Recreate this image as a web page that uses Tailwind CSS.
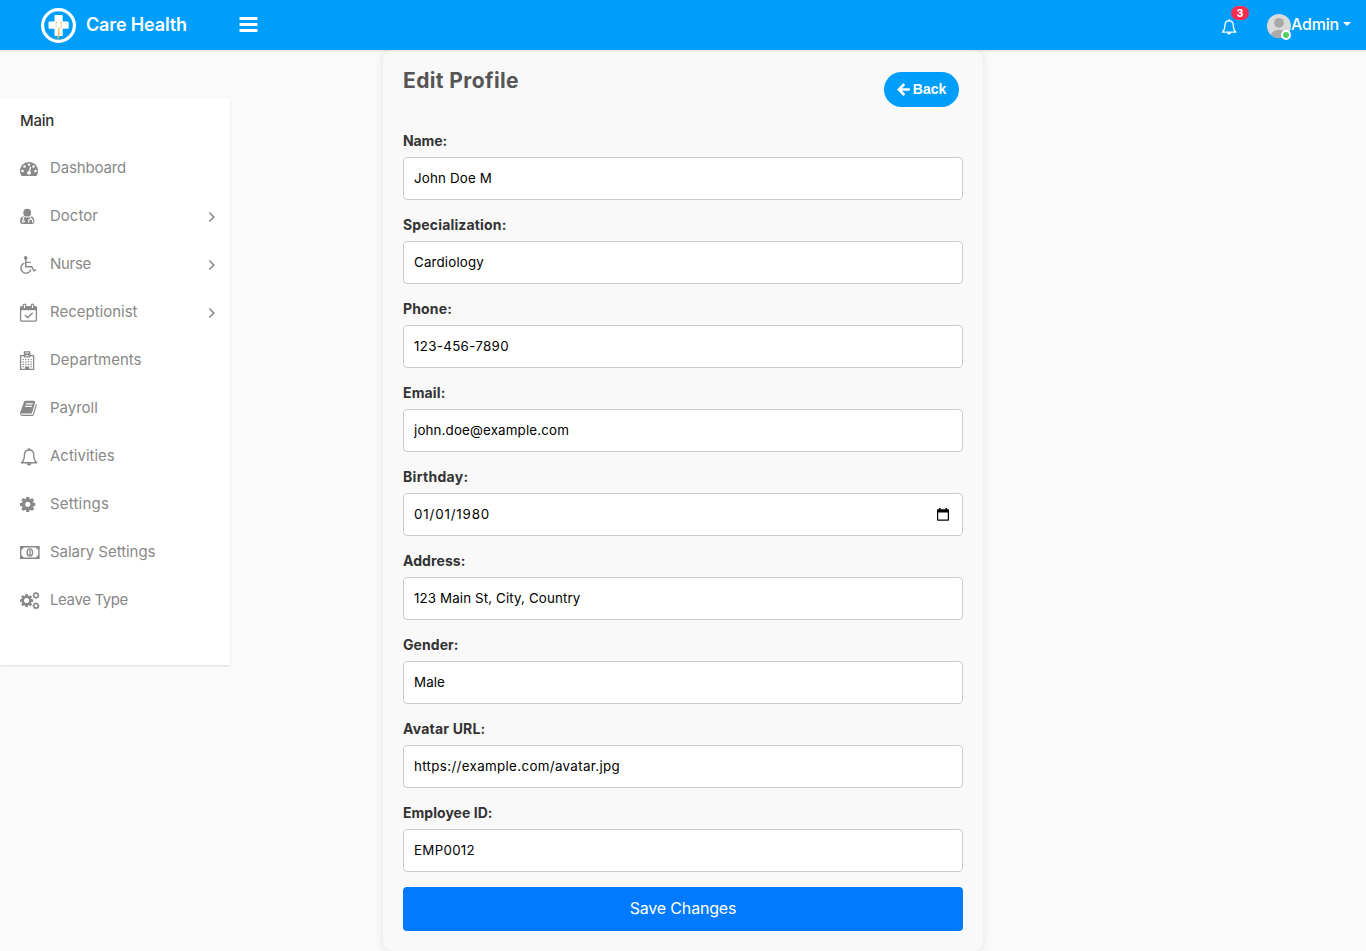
<!DOCTYPE html>
<html lang="en">
<head>
<meta charset="utf-8">
<title>Edit Profile - Care Health</title>
<script src="https://cdn.jsdelivr.net/npm/@tailwindcss/browser@4"></script>
</head>
<body class="h-[951px] overflow-hidden bg-[#fafafa] font-['Inter',sans-serif] text-[#333]">
<svg class="hidden">
  <symbol id="cog" viewBox="128 128 1536 1536"><path d="M1152 896q0-106-75-181t-181-75-181 75-75 181 75 181 181 75 181-75 75-181zm512-109v222q0 12-8 23t-20 13l-185 28q-19 54-39 91 35 50 107 138 10 12 10 25t-9 23q-27 37-99 108t-94 71q-12 0-26-9l-138-108q-44 23-91 38-16 136-29 186-7 28-36 28h-222q-14 0-24.500-8.500t-11.500-21.500l-28-184q-49-16-90-37l-141 107q-10 9-25 9-14 0-25-11-126-114-165-168-7-10-7-23 0-12 8-23 15-21 51-66.500t54-70.500q-27-50-41-99l-183-27q-13-2-21-12.500t-8-23.500v-222q0-12 8-23t19-13l186-28q14-46 39-92-40-57-107-138-10-12-10-24 0-10 9-23 26-36 98.500-107.500t94.500-71.500q13 0 26 10l138 107q44-23 91-38 16-136 29-186 7-28 36-28h222q14 0 24.500 8.500t11.500 21.500l28 184q49 16 90 37l142-107q9-9 24-9 13 0 25 10 129 119 165 170 7 8 7 22 0 12-8 23-15 21-51 66.500t-54 70.500q26 50 41 98l183 28q13 2 21 12.500t8 23.500z"/></symbol>
  <symbol id="bell" viewBox="0 0 18 18"><path d="M9.100 1.800C5.600 2.100 4.400 4.300 4.400 7.200c0 3.700-1 6-3 7.600h15.400c-2-1.600-3-3.900-3-7.600 0-2.900-1.200-5.100-4.700-5.400z" fill="none" stroke="currentColor" stroke-width="1.400" stroke-linejoin="round"/><path d="M8.200.3h1.800v1.700H8.200zM6.700 15.200h4.800a2.400 2.400 0 0 1-4.800 0z" fill="currentColor"/></symbol>
  <symbol id="chev" viewBox="0 0 8 12"><path d="m1.300 1.500 4.500 4.500-4.500 4.500" fill="none" stroke="currentColor" stroke-width="1.600"/></symbol>
</svg>

<header class="relative z-10 flex h-[50px] items-center bg-[#009efb] text-white shadow-[0_1px_1px_rgba(0,0,0,0.1)]">
  <svg class="ml-[41px] mt-px size-[35px]" viewBox="0 0 35 35">
    <circle cx="17.500" cy="17.500" r="15.900" fill="none" stroke="#fff" stroke-width="3.200"/>
    <path d="M14.500 7h6.200a1 1 0 0 1 1 1v5.500h5a1 1 0 0 1 1 1v5.300a1 1 0 0 1-1 1h-5V27a1 1 0 0 1-1 1h-6.200a1 1 0 0 1-1-1v-6.200h-5a1 1 0 0 1-1-1v-5.300a1 1 0 0 1 1-1h5V8a1 1 0 0 1 1-1z" fill="#fff"/>
    <path d="M15.300 14.500c-.8 3.500.2 6.300 2.300 6.300s3.200-2.800 2.400-6.300" fill="none" stroke="#d9d3c4" stroke-width=".9"/>
    <path d="M17.700 20.500c.4 3.500.4 6.500-.8 10.500" fill="none" stroke="#f5b73c" stroke-width="1.300"/>
    <circle cx="15.300" cy="14.500" r=".8" fill="#f5b73c"/><circle cx="20" cy="14.500" r=".8" fill="#f5b73c"/><circle cx="20" cy="19" r=".7" fill="#f5b73c"/>
  </svg>
  <span class="ml-[10px] mb-px w-[103px] whitespace-nowrap text-[18px] font-semibold tracking-[-0.15px]">Care Health</span>
  <svg class="ml-[50px] mb-px h-[15px] w-[19px]" viewBox="0 0 19 15" fill="#fff"><rect x=".5" y="0" width="18" height="3" rx=".6"/><rect x=".5" y="6" width="18" height="3" rx=".6"/><rect x=".5" y="12" width="18" height="3" rx=".6"/></svg>
  <div class="relative ml-auto mr-[30px] mt-1 size-4">
    <svg class="size-4"><use href="#bell"/></svg>
    <span class="absolute -top-[13px] left-[10px] flex h-[14px] w-[18px] items-center justify-center rounded-full bg-[#f62d51] text-[10px] font-extrabold">3</span>
  </div>
  <div class="relative mt-[2px] size-6">
    <svg class="size-6" viewBox="0 0 24 24"><defs><clipPath id="avatar"><circle cx="12" cy="12" r="12"/></clipPath></defs><g clip-path="url(#avatar)"><path fill="#dadada" d="M0 0h24v24H0z"/><circle cx="12" cy="8.800" r="4.900" fill="#a9a9a9"/><ellipse cx="12" cy="21.500" rx="8" ry="5.800" fill="#a9a9a9"/></g></svg>
    <span class="absolute left-[14px] top-4 size-[10px] rounded-full border-2 border-white bg-[#55ce63]"></span>
  </div>
  <span class="mb-[2px] w-[52px] whitespace-nowrap text-[16px] font-medium tracking-[-0.2px]">Admin</span>
  <svg class="mr-[15px] mb-[2px] h-1 w-2" viewBox="0 0 8 4" fill="#fff"><path d="M0 0h8L4 4z"/></svg>
</header>

<div class="flex">
  <aside class="mt-12 h-[567px] w-[230px] shrink-0 bg-white text-[15px] text-[#888] shadow-[0_1px_2px_rgba(0,0,0,0.12)]">
    <div class="h-[46px] pl-5 leading-[46px] font-medium tracking-[-0.25px] text-[#333]">Main</div>
    <nav class="[&>a]:flex [&>a]:h-12 [&>a]:items-center [&>a]:pl-5 [&>a]:pr-[14px] [&_span]:ml-[10px] [&_span]:flex-1 [&_span]:whitespace-nowrap [&_.ic]:mt-[2px] [&_.ic]:h-[18px] [&_.ic]:w-5 [&_.ic]:overflow-visible [&_.ch]:mt-px [&_.ch]:h-3 [&_.ch]:w-2">
      <a><svg class="ic" viewBox="0 0 20 18" fill="currentColor"><path transform="translate(0 -.6) scale(.010045)" d="M384 1152q0-53-37.500-90.500t-90.500-37.500-90.500 37.500-37.500 90.500 37.500 90.500 90.500 37.500 90.500-37.500 37.500-90.500zm192-448q0-53-37.500-90.500t-90.500-37.500-90.500 37.500-37.500 90.500 37.500 90.500 90.500 37.500 90.500-37.500 37.500-90.500zm428 481l101-382q6-26-7.500-48.500t-38.500-29.500-48 6.500-30 39.500l-101 382q-60 5-107 43.500t-63 98.500q-20 77 20 146t117 89 146-20 89-117q16-60-6-117t-72-91zm660-33q0-53-37.500-90.500t-90.500-37.500-90.500 37.500-37.500 90.500 37.500 90.500 90.500 37.500 90.500-37.500 37.500-90.500zm-640-640q0-53-37.500-90.500t-90.500-37.500-90.500 37.500-37.500 90.500 37.500 90.500 90.500 37.500 90.500-37.500 37.500-90.500zm448 192q0-53-37.500-90.500t-90.500-37.500-90.500 37.500-37.500 90.500 37.500 90.500 90.500 37.500 90.500-37.500 37.500-90.500zm320 448q0 261-141 483-19 29-54 29h-1402q-35 0-54-29-141-221-141-483 0-182 71-348t191-286 286-191 348-71 348 71 286 191 191 286 71 348z"/></svg><span class="tracking-[-0.15px]">Dashboard</span></a>
      <a><svg class="ic" viewBox="0 0 20 18" fill="currentColor"><circle cx="7.200" cy="4.700" r="3.900"/><path d="M3.200 8.200c1 .8 2.400 1.300 4 1.300s3-.5 4-1.300c2.500.7 3.200 3 3.200 5.300 0 1.700-.9 2.500-2.300 2.500H2.400C1 16 0 15.200 0 13.500c0-2.300.7-4.600 3.200-5.300z"/><path d="M3.300 8.700v3.200M8.700 14.700v-1.600a2 2 0 0 1 4 0v1.600M10.800 8.700v2" fill="none" stroke="#fff" stroke-width="1.100"/><circle cx="3.300" cy="13.200" r="1.500" fill="#fff"/><circle cx="3.300" cy="13.200" r=".6"/></svg><span>Doctor</span><svg class="ch"><use href="#chev"/></svg></a>
      <a><svg class="ic" viewBox="0 0 20 18" fill="none" stroke="currentColor" stroke-width="1.400"><circle cx="5.700" cy="1.900" r="1.800" fill="currentColor" stroke="none"/><path d="M5.700 3v7.700h6.100l2.100 4.200 2.300-1.100M5.700 6.400h5M4.400 7.200a5.100 5.100 0 1 0 6.500 6.300"/></svg><span class="tracking-[-0.3px]">Nurse</span><svg class="ch"><use href="#chev"/></svg></a>
      <a><svg class="ic" viewBox="0 0 20 18" fill="none" stroke="currentColor"><rect x=".6" y="2.800" width="15.800" height="14.300" rx=".8" stroke-width="1.300"/><path d="M.5 2.500h16v3.700H.5z" fill="currentColor" stroke="none"/><rect x="3.300" y=".2" width="2.400" height="4.300" rx="1.100" fill="#fff" stroke-width="1.200"/><rect x="11.300" y=".2" width="2.400" height="4.300" rx="1.100" fill="#fff" stroke-width="1.200"/><path d="m5 11 2.700 2.700 5-5" stroke-width="1.400"/></svg><span>Receptionist</span><svg class="ch"><use href="#chev"/></svg></a>
      <a><svg class="ic" viewBox="0 0 20 18" fill="none" stroke="currentColor" stroke-width="1.300"><path d="M4.200 3.600H.6v13.800h13V3.600H10M4.400-.2h5.400v5H4.400zM5.800.9v2.800M8.400.9v2.800M5.800 2.300h2.600"/><path d="M2.600 7.500h9.400M2.600 9.900h9.400M2.600 12.300h9.400" stroke-width="1.200" stroke-dasharray="1.300 1.300"/><path d="M5 14.400h4.200v3H5z" fill="currentColor" stroke="none"/><path d="M2.600 14.700h1.200M10.600 14.700h1.200"/></svg><span>Departments</span></a>
      <a><svg class="ic" viewBox="0 0 20 18" fill="currentColor"><path transform="translate(-.6 -.6) scale(.010045)" d="M1703 478q40 57 18 129l-275 906q-19 64-76.500 107.500t-122.500 43.500h-923q-77 0-148.500-53.500t-99.500-131.500q-24-67-2-127 0-4 3-27t4-37q1-8-3-21.500t-3-19.500q2-11 8-21t16.500-23.500 16.500-23.500q23-38 45-91.500t30-91.500q3-10 .5-30t-.5-28q3-11 17-28t17-23q21-36 42-92t25-90q1-9-2.500-32t.5-28q4-13 22-30.500t22-22.500q19-26 42.500-84.500t27.500-96.500q1-8-3-25.500t-2-26.500q2-8 9-18t18-23 17-21q8-12 16.500-30.500t15-35 16-36 19.500-32 26.500-23.500 36-11.500 47.500 5.500l-1 3q38-9 51-9h761q74 0 114 56t18 130l-274 906q-36 119-71.500 153.500t-128.500 34.500h-869q-27 0-38 15-11 16-1 43 24 70 144 70h923q29 0 56-15.500t35-41.500l300-987q7-22 5-57 38 15 59 43zm-1064 2q-4 13 2 22.500t20 9.500h608q13 0 25.500-9.500t16.500-22.500l21-64q4-13-2-22.500t-20-9.500h-608q-13 0-25.500 9.500t-16.500 22.500zm-83 256q-4 13 2 22.500t20 9.500h608q13 0 25.500-9.500t16.500-22.500l21-64q4-13-2-22.500t-20-9.500h-608q-13 0-25.500 9.500t-16.500 22.500z"/></svg><span>Payroll</span></a>
      <a><svg class="ic" viewBox="0 0 20 18"><use href="#bell" width="18" height="18"/></svg><span>Activities</span></a>
      <a><svg class="ic" viewBox="0 0 20 18" fill="currentColor"><use href="#cog" x="0" y=".7" width="15.500" height="15.500"/></svg><span class="tracking-[0.2px]">Settings</span></a>
      <a><svg class="ic" viewBox="0 0 20 18" fill="none" stroke="currentColor" stroke-width="1.400"><path d="M.7 2.700h18.200v11.600H.7z"/><path d="M.7 5.300a2.600 2.600 0 0 0 2.600-2.600H.7zM18.900 5.300a2.600 2.600 0 0 1-2.600-2.600h2.600zM.7 11.700a2.600 2.600 0 0 1 2.600 2.600H.7zM18.900 11.700a2.600 2.600 0 0 0-2.600 2.600h2.600z" fill="currentColor" stroke-width=".6"/><ellipse cx="9.800" cy="8.500" rx="2.700" ry="3.600"/><path d="M8.900 7.100l1.100-.7v4M8.700 10.500h2.300" stroke-width="1.100"/></svg><span class="tracking-[-0.04px]">Salary Settings</span></a>
      <a><svg class="ic" viewBox="0 0 20 18" fill="currentColor"><use href="#cog" x="0" y="2" width="13.200" height="13.200"/><use href="#cog" x="12.400" y="-.2" width="7.200" height="7.200"/><use href="#cog" x="12.400" y="10.200" width="7.200" height="7.200"/><circle cx="6.600" cy="8.600" r="2.500" fill="#fff"/><circle cx="16" cy="3.400" r="1.300" fill="#fff"/><circle cx="16" cy="13.800" r="1.300" fill="#fff"/></svg><span class="tracking-[-0.38px]">Leave Type</span></a>
    </nav>
  </aside>

  <main class="ml-[153px] h-[901px] w-[600px] shrink-0 rounded-[10px] bg-[#f9f9f9] px-5 shadow-[0_0_10px_rgba(0,0,0,0.1)]">
    <div class="flex h-[82px] justify-between pr-1">
      <h1 class="mt-[17px] text-[21px] font-bold leading-7 tracking-[0.39px] text-[#555]">Edit Profile</h1>
      <button class="mt-[22px] flex h-[35px] w-[75px] items-center justify-center gap-[3px] rounded-full bg-[#009efb] font-['Liberation_Sans',sans-serif] text-[14px] font-bold text-white"><svg class="size-[13px]" viewBox="0 0 13 13" fill="none" stroke="#fff" stroke-width="2.500"><path d="M7.300 1 1.900 6.500 7.300 12M2.500 6.500h10.300"/></svg>Back</button>
    </div>
    <form class="text-[14px] [&_label]:block [&_label]:h-[25px] [&_label]:pb-[8px] [&_label]:font-bold [&_label]:leading-[17px] [&>div]:mb-4 [&_input]:block [&_input]:h-[43px] [&_input]:w-full [&_input]:rounded [&_input]:border [&_input]:border-[#ccc] [&_input]:bg-white [&_input]:px-[10px] [&_input]:pb-[2px] [&_input]:text-[13.333px] [&_input]:text-black">
      <div><label class="tracking-[-0.12px]">Name:</label><input class="tracking-[0.17px]" value="John Doe M"></div>
      <div><label class="tracking-[0.16px]">Specialization:</label><input class="tracking-[0.17px]" value="Cardiology"></div>
      <div><label class="tracking-[0.15px]">Phone:</label><input class="tracking-[0.33px]" value="123-456-7890"></div>
      <div><label class="tracking-[0.14px]">Email:</label><input class="tracking-[0.16px]" value="john.doe@example.com"></div>
      <div><label class="tracking-[0.31px]">Birthday:</label><div class="relative"><input class="tracking-[0.84px]" value="01/01/1980"><svg class="absolute right-[14px] top-[15px] h-[13px] w-3" viewBox="0 0 12 13"><path d="M2 0h1.500v1.300h5V0H10v1.300h1.200c.5 0 .8.3.8.8v9.800c0 .5-.3.8-.8.8H.8c-.5 0-.8-.3-.8-.8V2.100c0-.5.3-.8.8-.8H2zM1.200 4.500v7h9.600v-7z" fill="#000" fill-rule="evenodd"/></svg></div></div>
      <div><label class="tracking-[0.08px]">Address:</label><input class="tracking-[0.13px]" value="123 Main St, City, Country"></div>
      <div><label class="tracking-[0.06px]">Gender:</label><input class="tracking-[0.12px]" value="Male"></div>
      <div><label class="tracking-[0.2px]">Avatar URL:</label><input class="tracking-[0.35px]" value="https://example.com/avatar.jpg"></div>
      <div><label class="tracking-[0.03px]">Employee ID:</label><input class="tracking-[0.29px]" value="EMP0012"></div>
      <button type="button" class="-mt-px block h-11 w-full rounded bg-[#007bff] pb-[2px] text-[16px] tracking-[-0.18px] text-white">Save Changes</button>
    </form>
  </main>
</div>
</body>
</html>
